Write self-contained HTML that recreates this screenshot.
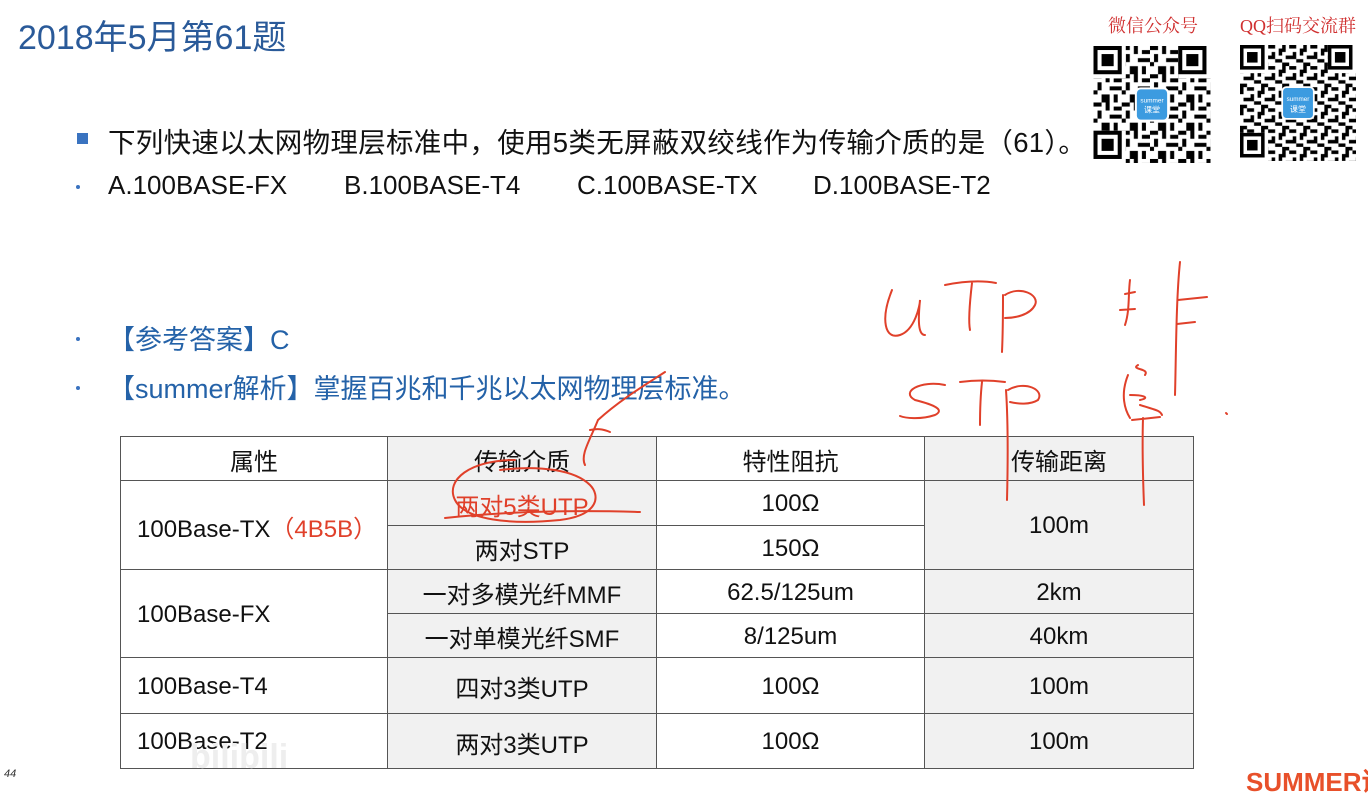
<!DOCTYPE html>
<html><head><meta charset="utf-8"><style>
body{margin:0;width:1368px;height:782px;background:#fff;position:relative;overflow:hidden;font-family:"Liberation Sans","Noto Sans CJK SC",sans-serif;}
.a{position:absolute;white-space:nowrap;}
table{position:absolute;left:120px;top:436px;border-collapse:collapse;font-size:24px;color:#111;}
td{border:1.5px solid #555;padding:2px 0 0 0;text-align:center;}
.g{background:#f1f1f1;}
</style></head><body>
<div class="a" style="left:18px;top:10px;font-size:34px;color:#2a5a99;">2018年5月第61题</div>
<div class="a" style="left:77px;top:133px;width:11px;height:11px;background:#3a73c0;"></div>
<div class="a" style="left:108px;top:120px;font-size:27.5px;color:#111;letter-spacing:0.3px">下列快速以太网物理层标准中，使用5类无屏蔽双绞线作为传输介质的是（61）。</div>
<div class="a" style="left:76px;top:185px;width:4px;height:4px;border-radius:2px;background:#3a73c0;"></div>
<div class="a" style="left:108px;top:170px;font-size:26px;color:#111;">A.100BASE-FX</div>
<div class="a" style="left:344px;top:170px;font-size:26px;color:#111;">B.100BASE-T4</div>
<div class="a" style="left:577px;top:170px;font-size:26px;color:#111;">C.100BASE-TX</div>
<div class="a" style="left:813px;top:170px;font-size:26px;color:#111;">D.100BASE-T2</div>
<div class="a" style="left:76px;top:337px;width:4px;height:4px;border-radius:2px;background:#3a73c0;"></div>
<div class="a" style="left:108px;top:318px;font-size:27px;color:#2462a8;">【参考答案】C</div>
<div class="a" style="left:76px;top:386px;width:4px;height:4px;border-radius:2px;background:#3a73c0;"></div>
<div class="a" style="left:108px;top:367px;font-size:27px;color:#2462a8;">【summer解析】掌握百兆和千兆以太网物理层标准。</div>

<div class="a" style="left:1108px;top:12px;font-size:18px;color:#d03030;font-family:'Liberation Serif','Noto Serif CJK SC',serif;">微信公众号</div>
<div class="a" style="left:1240px;top:12px;font-size:18px;color:#d03030;font-family:'Liberation Serif','Noto Serif CJK SC',serif;">QQ扫码交流群</div>
<svg class="a" style="left:1093px;top:46px" width="118" height="117" viewBox="0 0 29 29">
<defs><pattern id="p" width="7" height="7" patternUnits="userSpaceOnUse"><rect width="7" height="7" fill="#fff"/><path d="M0 0h2v1H0zM3 0h1v2H3zM5 1h2v1H5zM1 2h1v2H1zM4 3h2v1H4zM0 4h1v1H0zM2 5h2v2H2zM5 5h1v2H5zM6 3h1v1H6z" fill="#000"/></pattern></defs>
<rect width="29" height="29" fill="url(#p)"/>
<g fill="#fff"><rect width="8" height="8"/><rect x="21" width="8" height="8"/><rect y="21" width="8" height="8"/></g>
<g fill="none" stroke="#000"><rect x=".5" y=".5" width="6" height="6"/><rect x="21.5" y=".5" width="6" height="6"/><rect x=".5" y="21.5" width="6" height="6"/></g>
<g fill="#000"><rect x="2" y="2" width="3" height="3"/><rect x="23" y="2" width="3" height="3"/><rect x="2" y="23" width="3" height="3"/></g>
<rect x="10.5" y="10.5" width="8" height="8" rx="1.2" fill="#3c9be0" stroke="#fff" stroke-width=".5"/>
<text x="14.5" y="14" font-size="1.6" fill="#fff" text-anchor="middle">summer</text><text x="14.5" y="16.5" font-size="2" fill="#fff" text-anchor="middle">课堂</text>
</svg>
<svg class="a" style="left:1240px;top:45px" width="116" height="116" viewBox="0 0 33 33">
<defs><pattern id="q" width="6" height="6" patternUnits="userSpaceOnUse"><rect width="6" height="6" fill="#fff"/><path d="M0 0h1v2H0zM2 0h2v1H2zM5 1h1v2H5zM1 3h2v1H1zM3 2h1v2H3zM4 4h2v1H4zM0 5h2v1H0z" fill="#000"/></pattern></defs>
<rect width="33" height="33" fill="url(#q)"/>
<g fill="#fff"><rect width="8" height="8"/><rect x="25" width="8" height="8"/><rect y="25" width="8" height="8"/></g>
<g fill="none" stroke="#000"><rect x=".5" y=".5" width="6" height="6"/><rect x="25.5" y=".5" width="6" height="6"/><rect x=".5" y="25.5" width="6" height="6"/></g>
<g fill="#000"><rect x="2" y="2" width="3" height="3"/><rect x="27" y="2" width="3" height="3"/><rect x="2" y="27" width="3" height="3"/></g>
<rect x="12" y="12" width="9" height="9" rx="1.2" fill="#3c9be0" stroke="#fff" stroke-width=".5"/>
<text x="16.5" y="16" font-size="1.8" fill="#fff" text-anchor="middle">summer</text><text x="16.5" y="19" font-size="2.3" fill="#fff" text-anchor="middle">课堂</text>
</svg>

<table>
<colgroup><col style="width:267px"><col style="width:269px"><col style="width:268px"><col style="width:269px"></colgroup>
<tr style="height:44px"><td>属性</td><td class="g">传输介质</td><td>特性阻抗</td><td class="g">传输距离</td></tr>
<tr style="height:45px"><td rowspan="2" style="text-align:left;padding-left:16px">100Base-TX<span style="color:#e0402a">（4B5B）</span></td><td class="g" style="color:#e0402a">两对5类UTP</td><td>100Ω</td><td class="g" rowspan="2">100m</td></tr>
<tr style="height:44px"><td class="g">两对STP</td><td>150Ω</td></tr>
<tr style="height:44px"><td rowspan="2" style="text-align:left;padding-left:16px">100Base-FX</td><td class="g">一对多模光纤MMF</td><td>62.5/125um</td><td class="g">2km</td></tr>
<tr style="height:44px"><td class="g">一对单模光纤SMF</td><td>8/125um</td><td class="g">40km</td></tr>
<tr style="height:56px"><td style="text-align:left;padding-left:16px">100Base-T4</td><td class="g">四对3类UTP</td><td>100Ω</td><td class="g">100m</td></tr>
<tr style="height:55px"><td style="text-align:left;padding-left:16px">100Base-T2</td><td class="g">两对3类UTP</td><td>100Ω</td><td class="g">100m</td></tr>
</table>

<svg class="a" style="left:0;top:0" width="1368" height="782" fill="none" stroke="#e0402a" stroke-width="2" stroke-linecap="round">
<path d="M892 290 C880 320 885 340 900 335 C915 330 920 305 920 300 C918 320 918 335 925 335"/>
<path d="M945 285 C960 282 980 280 996 283 M972 283 C970 300 968 320 970 330"/>
<path d="M1003 295 C1003 310 1003 330 1002 352 M1005 295 C1020 285 1040 295 1035 305 C1030 315 1015 318 1005 318"/>
<path d="M1130 280 C1128 295 1130 310 1125 325 M1125 294 L1135 292 M1120 310 L1135 309"/>
<path d="M1180 262 C1176 300 1176 360 1175 395 M1178 300 L1207 297 M1177 324 L1195 322"/>
<path d="M945 385 C920 380 900 392 915 400 C935 405 945 410 935 415 C920 420 905 418 900 416"/>
<path d="M960 382 C975 380 990 380 1005 382 M982 382 C980 400 980 415 980 425"/>
<path d="M1006 390 C1008 420 1008 460 1007 500 M1008 390 C1025 380 1045 390 1038 400 C1030 405 1018 404 1010 402"/>
<path d="M1138 365 C1130 370 1150 368 1145 375 M1128 375 C1120 395 1125 410 1130 418 M1130 395 C1145 395 1150 398 1140 400 M1140 405 C1155 410 1160 410 1162 415 M1132 420 L1160 417 M1143 418 C1142 450 1143 480 1144 505"/>
<path d="M1226 413 l1 1"/>
<path d="M598 420 C620 400 645 385 665 372 M598 420 C590 440 580 455 585 465 M590 430 C600 428 605 430 610 432"/>
<path d="M515 460 C470 460 445 480 455 500 C465 520 510 525 560 520 C600 515 600 495 590 485 C575 470 540 465 500 470"/>
<path d="M445 518 C500 512 570 510 640 512"/>
</svg>

<div class="a" style="left:4px;top:768px;font-size:11px;color:#333;font-style:italic;">44</div>
<div class="a" style="left:190px;top:738px;font-size:34px;font-weight:bold;color:#eee;">bilibili</div>
<div class="a" style="left:1246px;top:762px;font-size:26px;font-weight:bold;color:#e8502a;">SUMMER课</div>
</body></html>
